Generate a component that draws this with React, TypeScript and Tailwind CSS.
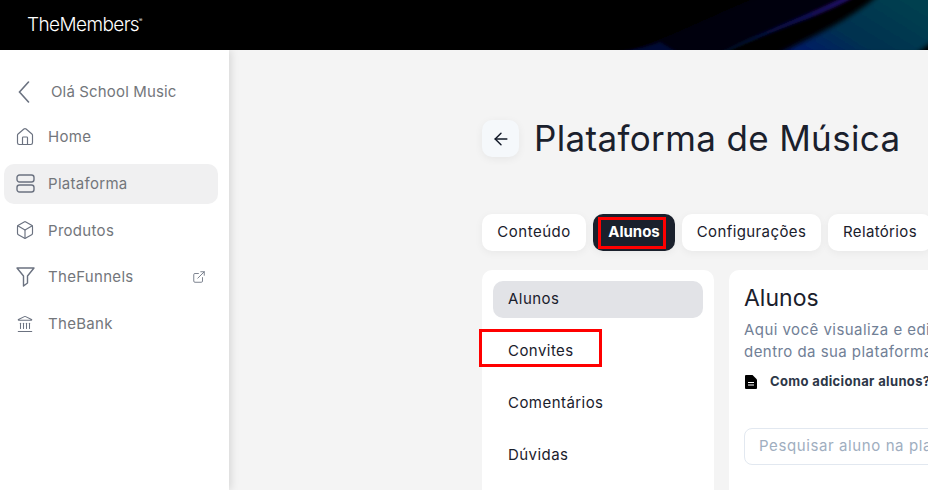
import React from "react";
import { ArrowLeft, Box, ExternalLink, Home, Landmark } from "lucide-react";

const font = "font-['Inter','Liberation_Sans',sans-serif]";

const HeaderGlow = () => (
  <svg className="absolute inset-0 h-full w-full" viewBox="0 0 928 50" preserveAspectRatio="none">
    <defs>
      <linearGradient id="teal" x1="0" y1="1" x2="1" y2="0.4">
        <stop offset="0" stopColor="#001470" />
        <stop offset="0.45" stopColor="#003050" />
        <stop offset="1" stopColor="#004050" />
      </linearGradient>
      <linearGradient id="purple" x1="0" y1="1" x2="1" y2="0">
        <stop offset="0" stopColor="#001a38" />
        <stop offset="0.55" stopColor="#0a0a50" />
        <stop offset="1" stopColor="#241068" />
      </linearGradient>
      <filter id="blur"><feGaussianBlur stdDeviation="2.5" /></filter>
      <filter id="soft"><feGaussianBlur stdDeviation="1.5" /></filter>
    </defs>
    <path d="M610 54 C650 48 690 25 760 -4 L850 -4 C800 20 760 38 720 54Z" fill="#00000f" filter="url(#blur)" />
    <path d="M610 54 C630 50 645 48 660 42 L680 54Z" fill="#001040" opacity="0.8" filter="url(#soft)" />
    <path d="M722 54 C770 30 820 18 856 -4 L846 -4 C810 14 770 28 718 54Z" fill="url(#purple)" filter="url(#soft)" />
    <path d="M778 54 C810 38 850 20 880 -6 L940 -6 L940 36 L916 54Z" fill="url(#teal)" filter="url(#blur)" />
  </svg>
);

const BackChevron = () => (
  <svg width="12" height="22" viewBox="0 0 12 22" fill="none" stroke="#6b7280" strokeWidth="1.6" strokeLinecap="round">
    <path d="M10.5 1 1.5 11l9 10" />
  </svg>
);

const PlatformIcon = () => (
  <svg width="19" height="19" viewBox="0 0 19 19" fill="none" stroke="#6b7280" strokeWidth="1.4">
    <rect x="1" y="1" width="17" height="7" rx="2.5" />
    <rect x="1" y="11" width="17" height="7" rx="2.5" />
  </svg>
);

const FunnelIcon = () => (
  <svg width="19" height="20" viewBox="0 0 19 20" fill="none" stroke="#6b7280" strokeWidth="1.4" strokeLinejoin="round">
    <path d="M1 1h17l-6.5 8v7l-4 3V9L1 1Z" />
  </svg>
);

const sideItems = [
  { label: "Home", icon: <Home size={20} strokeWidth={1.4} color="#6b7280" /> },
  { label: "Plataforma", icon: <PlatformIcon />, active: true },
  { label: "Produtos", icon: <Box size={20} strokeWidth={1.4} color="#6b7280" /> },
  { label: "TheFunnels", icon: <FunnelIcon />, external: true },
  { label: "TheBank", icon: <Landmark size={18} strokeWidth={1.4} color="#6b7280" /> },
];

const Sidebar = () => (
  <aside className="z-10 w-[229px] shrink-0 bg-white pl-[4px] pr-[11px] pt-[27px] shadow-[2px_0_8px_rgba(0,0,0,0.12)]">
    <div className="flex h-[30px] items-center pl-[14px] text-[15px] tracking-[0.15px] text-[#73767b]">
      <BackChevron />
      <span className="ml-[21px]">Olá School Music</span>
    </div>
    <div className="mt-[10px] flex flex-col gap-[6.67px]">
      {sideItems.map((item) => (
        <div
          key={item.label}
          className={`flex h-[40px] items-center rounded-[10px] pl-[11px] pr-[12px] text-[15px] tracking-[0.3px] text-[#73767b] ${item.active ? "bg-[#f0f0f1]" : ""}`}
        >
          <span className="flex w-[20px] justify-center">{item.icon}</span>
          <span className="ml-[13px] flex-1 pt-[1px]">{item.label}</span>
          {item.external && <ExternalLink size={14} strokeWidth={1.5} color="#6b7280" />}
        </div>
      ))}
    </div>
  </aside>
);

const tabs = [
  { label: "Conteúdo", size: "w-[104px] bg-white tracking-[0.5px] text-[#1a202c]" },
  { label: "Alunos", size: "w-[82px] bg-[#1a202c] font-bold text-white" },
  { label: "Configurações", size: "w-[139px] bg-white tracking-[0.4px] text-[#1a202c]" },
  { label: "Relatórios", size: "w-[104px] bg-white tracking-[0.35px] text-[#1a202c]" },
];
const subMenu = ["Alunos", "Convites", "Comentários", "Dúvidas"];

const Main = () => (
  <main className="min-w-0 flex-1 overflow-hidden bg-[#f4f4f4] pl-[253px] pt-[70px]">
    <div className="flex items-center">
      <button className="flex h-[37px] w-[37px] items-center justify-center rounded-[10px] bg-[#f5f8fb] shadow-[0_2px_8px_rgba(0,0,0,0.06)]">
        <ArrowLeft size={20} strokeWidth={1.7} color="#111827" />
      </button>
      <h1 className="ml-[15px] whitespace-nowrap text-[35px] leading-[37px] tracking-[0.35px] text-[#1a202c]">Plataforma de Música</h1>
    </div>
    <div className="mt-[57px] flex gap-[7px]">
      {tabs.map((tab) => (
        <div
          key={tab.label}
          className={`flex h-[37px] shrink-0 items-center justify-center rounded-[10px] text-[15px] shadow-[0_2px_8px_rgba(0,0,0,0.05)] ${tab.size}`}
        >
          {tab.label}
        </div>
      ))}
    </div>
    <div className="mt-[19px] flex items-start gap-[15px]">
      <div className="h-[260px] w-[232px] shrink-0 rounded-t-[10px] bg-white px-[11px] pt-[11px]">
        <div className="flex flex-col gap-[15px]">
          {subMenu.map((item, i) => (
            <div
              key={item}
              className={`flex h-[37px] items-center rounded-[10px] pl-[15px] text-[15px] tracking-[0.45px] text-[#1a202c] ${i === 0 ? "bg-[#e2e3e7]" : ""}`}
            >
              {item}
            </div>
          ))}
        </div>
      </div>
      <div className="h-[260px] w-[400px] shrink-0 rounded-tl-[10px] bg-white pl-[15px] pt-[15px]">
        <h2 className="text-[23px] leading-[26px] text-[#1a202c]">Alunos</h2>
        <p className="mt-[8px] whitespace-nowrap text-[15px] leading-[22px] tracking-[0.45px] text-[#718096]">Aqui você visualiza e edita</p>
        <p className="whitespace-nowrap text-[15px] leading-[22px] tracking-[0.45px] text-[#718096]">dentro da sua plataforma</p>
        <div className="mt-[9px] flex items-center">
          <svg width="14" height="16" viewBox="0 0 14 16" fill="#000">
            <path d="M2 1h6.5L13 5.5V14a1 1 0 0 1-1 1H2a1 1 0 0 1-1-1V2a1 1 0 0 1 1-1Z" />
            <path d="M4 8.5h6M4 11h6" stroke="#fff" strokeWidth="1.2" />
          </svg>
          <span className="ml-[12px] whitespace-nowrap text-[13px] font-bold tracking-[0.35px] text-[#2d3748]">Como adicionar alunos?</span>
        </div>
        <div className="mt-[36px] flex h-[37px] items-center whitespace-nowrap rounded-[8px] border border-[#e2e8f0] pl-[14px] text-[15px] tracking-[0.6px] text-[#a0aec0]">
          Pesquisar aluno na plataforma
        </div>
      </div>
    </div>
  </main>
);

export default function App() {
  return (
    <div className={`relative flex h-[490px] w-[928px] flex-col overflow-hidden ${font}`}>
      <header className="relative flex h-[50px] shrink-0 items-center overflow-hidden bg-black pl-[27px]">
        <HeaderGlow />
        <span className="relative text-[19px] font-light tracking-[-0.6px] text-white">TheMembers</span>
        <span className="relative mb-[8px] text-[5px] text-white">®</span>
      </header>
      <div className="flex min-h-0 flex-1">
        <Sidebar />
        <Main />
      </div>
      <div className="absolute left-[4px] top-[167px] h-[34px] w-[140px] border-[3px] border-[#f00]" />
      <div className="absolute left-[598px] top-[217px] h-[32px] w-[68px] border-[3px] border-[#f00]" />
      <div className="absolute left-[479px] top-[329px] h-[38px] w-[123px] border-[3px] border-[#f00]" />
    </div>
  );
}
